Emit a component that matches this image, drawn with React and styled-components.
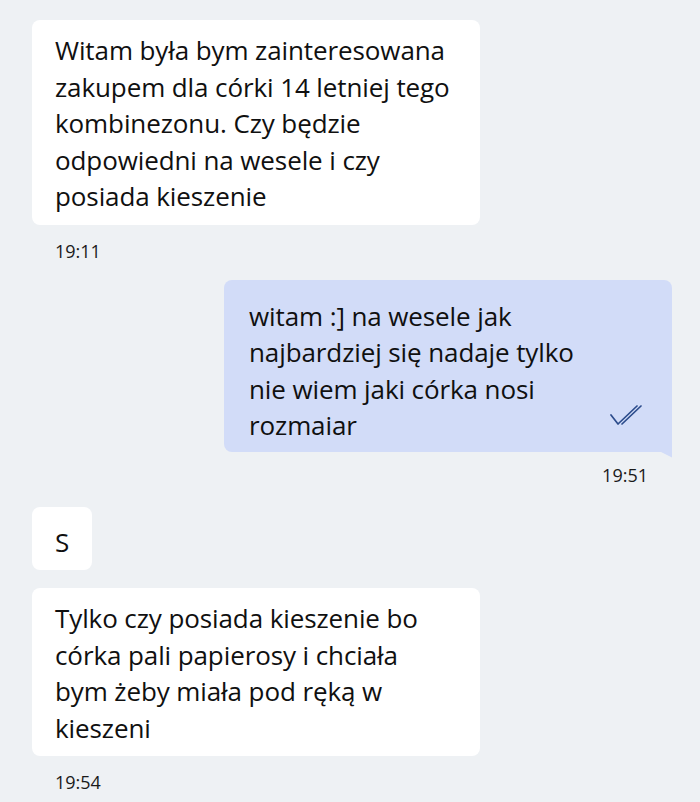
import React from 'react'
import styled, { createGlobalStyle } from 'styled-components'

const Global = createGlobalStyle`
  html, body {
    margin: 0;
    padding: 0;
    background: #eef1f4;
  }
  body {
    font-family: "Open Sans", "Noto Sans", sans-serif;
    color: #141414;
  }
`

const messages = [
  {
    id: 1,
    mine: false,
    lines: [
      'Witam była bym zainteresowana',
      'zakupem dla córki 14 letniej tego',
      'kombinezonu. Czy będzie',
      'odpowiedni na wesele i czy',
      'posiada kieszenie',
    ],
    time: '19:11',
    after: 0,
  },
  {
    id: 2,
    mine: true,
    lines: [
      'witam :] na wesele jak',
      'najbardziej się nadaje tylko',
      'nie wiem jaki córka nosi',
      'rozmaiar',
    ],
    time: '19:51',
    read: true,
    after: 3,
  },
  { id: 3, mine: false, lines: ['S'], short: true, after: 0 },
  {
    id: 4,
    mine: false,
    lines: [
      'Tylko czy posiada kieszenie bo',
      'córka pali papierosy i chciała',
      'bym żeby miała pod ręką w',
      'kieszeni',
    ],
    time: '19:54',
    after: 0,
  },
]

function ReadMark() {
  return (
    <Check viewBox="0 0 40 24" width="40" height="24">
      <path d="M1 12 L8 21 L27 3" />
      <path d="M12 21 L31 3" />
    </Check>
  )
}

function App() {
  return (
    <>
      <Global />
      <Chat>
        {messages.map((m) => (
          <Group key={m.id} $mine={m.mine} $after={m.after}>
            <Bubble $mine={m.mine} $short={m.short}>
              <Text>
                {m.lines.map((l, i) => (
                  <Line key={i}>{l}</Line>
                ))}
              </Text>
              {m.read && <ReadMark />}
            </Bubble>
            {m.time && <Time $mine={m.mine}>{m.time}</Time>}
          </Group>
        ))}
      </Chat>
    </>
  )
}

const Chat = styled.div`
  display: flex;
  flex-direction: column;
  gap: 18px;
  padding: 20px 28px 0 32px;
  min-height: 802px;
  box-sizing: border-box;
`

const Group = styled.div`
  display: flex;
  flex-direction: column;
  align-items: ${(p) => (p.$mine ? 'flex-end' : 'flex-start')};
  margin-bottom: ${(p) => p.$after}px;
`

const Bubble = styled.div`
  position: relative;
  display: flex;
  align-items: flex-end;
  justify-content: space-between;
  box-sizing: border-box;
  width: ${(p) => (p.$short ? '60px' : '448px')};
  background: ${(p) => (p.$mine ? '#d2dcf8' : '#ffffff')};
  border-radius: ${(p) => (p.$mine ? '8px 8px 0 8px' : '8px')};
  padding: ${(p) =>
    p.$short ? '17px 0 10px 23px' : p.$mine ? '18px 22px 8px 25px' : '12px 20px 10px 23px'};

  ${(p) =>
    p.$mine &&
    `
    &::after {
      content: '';
      position: absolute;
      right: 0;
      bottom: -6px;
      width: 12px;
      height: 6px;
      background: #d2dcf8;
      clip-path: polygon(0 0, 100% 0, 100% 100%);
    }
  `}
`

const Text = styled.div`
  font-size: 26px;
  line-height: 36.5px;
  letter-spacing: -0.1px;
  color: #101010;
`

const Line = styled.div`
  white-space: nowrap;
`

const Check = styled.svg`
  flex: none;
  margin: 0 0 17px 0;
  fill: none;
  stroke: #2c4c8c;
  stroke-width: 1.7;
  stroke-linecap: round;
  stroke-linejoin: round;
`

const Time = styled.div`
  font-size: 18px;
  line-height: 22px;
  color: #1a1a1a;
  margin-top: ${(p) => (p.$mine ? '12px' : '15px')};
  padding: ${(p) => (p.$mine ? '0 24px 0 0' : '0 0 0 23px')};
`

export default App
